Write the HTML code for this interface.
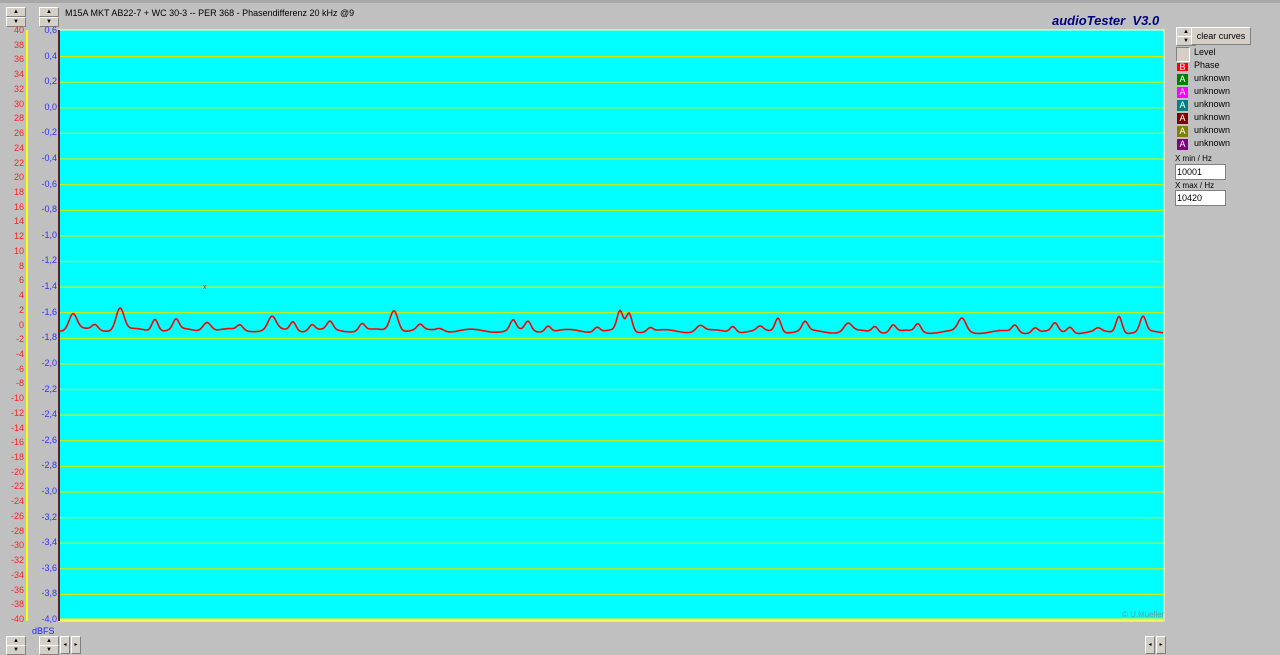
<!DOCTYPE html>
<html><head><meta charset="utf-8"><style>
body{margin:0;width:1280px;height:654px;background:#c0c0c0;position:relative;overflow:hidden;font-family:"Liberation Sans",sans-serif}
.a{position:absolute}
.btn{position:absolute;width:18px;height:8px;background:#d4d0c8;border:1px solid;border-color:#fff #808080 #808080 #fff;font-size:6px;line-height:8px;text-align:center;color:#000}
.hb{position:absolute;width:8px;height:16px;background:#d4d0c8;border:1px solid;border-color:#fff #808080 #808080 #fff;font-size:6px;line-height:16px;text-align:center}
.lab{position:absolute;font-size:9px;text-align:right}
.lg{position:absolute;left:1194px;font-size:9px;color:#000}
.sw{position:absolute;left:1176px;width:11px;height:11px;border:1px solid #c0c0c0;color:#fff;font-size:9px;line-height:11px;text-align:center}
</style></head><body>
<div class="a" style="left:0;top:0;width:1280px;height:3px;background:#a8a8a8"></div>
<div class="btn" style="left:6px;top:7px">▲</div><div class="btn" style="left:6px;top:17px">▼</div>
<div class="btn" style="left:39px;top:7px">▲</div><div class="btn" style="left:39px;top:17px">▼</div>
<div class="a" style="left:65px;top:8px;font-size:9px;color:#000">M15A MKT AB22-7 + WC 30-3 -- PER 368 - Phasendifferenz 20 kHz @9</div>
<div class="a" style="left:1052px;top:13px;font-size:13px;font-weight:bold;font-style:italic;color:#000080">audioTester&nbsp; V3.0</div>
<div class="a" style="left:26px;top:30px;width:2px;height:591px;background:#ffff00"></div>
<svg class="a" style="left:0;top:0" width="1280" height="654" id="s">
<rect x="59" y="30" width="1105" height="591" fill="#00ffff" stroke="#ffffc0" stroke-width="1"/>
<line x1="59" y1="30" x2="59" y2="621" stroke="#602020" stroke-width="2"/>
<g id="g"></g>
<path id="c" fill="none" stroke="#ff0000" stroke-width="1.6"/>
<text x="203" y="289" fill="#ff0000" font-size="7" font-family="Liberation Sans">x</text>
<text x="1122" y="617" fill="#60a0a0" font-size="8" font-family="Liberation Sans">© U.Mueller</text>
</svg>
<div id="L"></div>
<div class="a" style="left:32px;top:626px;font-size:9px;color:#2020ff">dBFS</div>
<div class="btn" style="left:6px;top:636px">▲</div><div class="btn" style="left:6px;top:645px">▼</div>
<div class="btn" style="left:39px;top:636px">▲</div><div class="btn" style="left:39px;top:645px">▼</div>
<div class="hb" style="left:60px;top:636px">◂</div><div class="hb" style="left:71px;top:636px">▸</div>
<div class="hb" style="left:1145px;top:636px">◂</div><div class="hb" style="left:1156px;top:636px">▸</div>
<div class="btn" style="left:1176px;top:27px">▲</div><div class="btn" style="left:1176px;top:36px">▼</div>
<div class="a" style="left:1191px;top:27px;width:58px;height:16px;background:#d4d0c8;border:1px solid;border-color:#fff #808080 #808080 #fff;font-size:9px;line-height:16px;text-align:center">clear curves</div>
<div class="a" style="left:1176px;top:47px;width:12px;height:13px;background:#d4d0c8;border:1px solid;border-color:#808080 #fff #fff #808080"></div>
<div class="lg" style="top:47px">Level</div>
<div class="sw" style="top:62px;background:#ff0000;height:8px;line-height:8px">B</div><div class="lg" style="top:60px">Phase</div>
<div class="sw" style="top:73px;background:#008000">A</div><div class="lg" style="top:73px">unknown</div>
<div class="sw" style="top:86px;background:#ff00ff">A</div><div class="lg" style="top:86px">unknown</div>
<div class="sw" style="top:99px;background:#008080">A</div><div class="lg" style="top:99px">unknown</div>
<div class="sw" style="top:112px;background:#800000">A</div><div class="lg" style="top:112px">unknown</div>
<div class="sw" style="top:125px;background:#808000">A</div><div class="lg" style="top:125px">unknown</div>
<div class="sw" style="top:138px;background:#800080">A</div><div class="lg" style="top:138px">unknown</div>
<div class="a" style="left:1175px;top:154px;font-size:8px">X min / Hz</div>
<div class="a" style="left:1175px;top:164px;width:48px;height:14px;background:#fff;border:1px solid #808080;font-size:9px;line-height:14px;padding-left:1px">10001</div>
<div class="a" style="left:1175px;top:181px;font-size:8px">X max / Hz</div>
<div class="a" style="left:1175px;top:190px;width:48px;height:14px;background:#fff;border:1px solid #808080;font-size:9px;line-height:14px;padding-left:1px">10420</div>
<script>
var g=document.getElementById('g'),L=document.getElementById('L'),h='',l='';
for(var i=0;i<=23;i++){var y=31+i*(589/23);
 if(i>0&&i<23)h+='<line x1="60" x2="1163" y1="'+y.toFixed(1)+'" y2="'+y.toFixed(1)+'" stroke="#d8e800" stroke-width="1.2"/>';
 var v=(0.6-i*0.2).toFixed(1).replace('.',',');if(v=='-0,0')v='0,0';
 l+='<div class="lab" style="left:18px;width:39px;top:'+(y-6)+'px;color:#3030ff">'+v+'</div>';}
h+='<line x1="60" x2="1163" y1="619.5" y2="619.5" stroke="#ffff00" stroke-width="2"/>';
for(var i=0;i<=40;i++){var y=31+i*(589/40);l+='<div class="lab" style="left:0;width:24px;top:'+(y-6)+'px;color:#ff2020">'+(40-2*i)+'</div>';}
g.innerHTML=h;L.innerHTML=l;
var pk=[[73,16,4],[95,5,3],[120,22,4],[155,12,3],[176,10,3],[207,9,4],[240,5,3],[272,13,4],[293,9,3],[312,6,3],[330,8,3],[362,7,3],[394,21,4],[420,5,3],[440,3,4],[513,10,3],[528,9,3],[548,6,3],[597,5,3],[620,19,3],[629,18,3],[650,4,3],[700,6,4],[733,6,3],[760,4,3],[778,14,3],[805,9,3],[848,8,4],[875,6,3],[893,7,3],[918,8,3],[962,13,4],[1015,7,3],[1035,5,3],[1055,8,3],[1070,6,3],[1098,3,3],[1119,17,3],[1143,15,3]];
var d='';for(var x=60;x<=1163;x+=1){var y=331+1.5*Math.sin(x*0.13)+0.006*(x-600)*0.4;
for(var k=0;k<pk.length;k++){var p=pk[k];y-=p[1]*Math.exp(-Math.pow((x-p[0])/p[2]/1.4,2));}
d+=(x==60?'M':'L')+x+' '+y.toFixed(1);}
document.getElementById('c').setAttribute('d',d);
</script>
</body></html>
